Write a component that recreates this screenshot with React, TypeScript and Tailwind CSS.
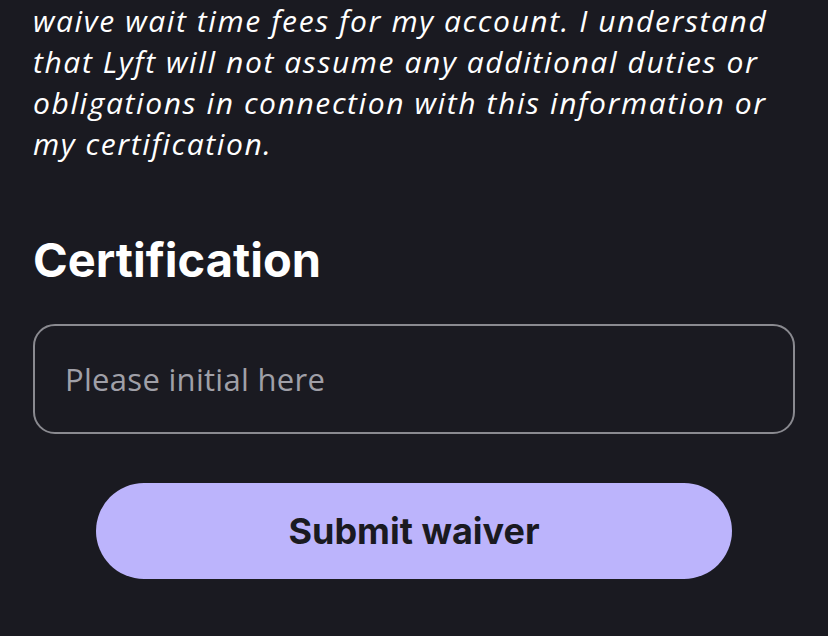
const lines = [
  "waive wait time fees for my account. I understand",
  "that Lyft will not assume any additional duties or",
  "obligations in connection with this information or",
  "my certification.",
];

export default function App() {
  return (
    <div className="min-h-[636px] w-full bg-[#1a1a21] px-[33px] pb-[57px] font-['Open_Sans',sans-serif]">
      <p className="text-[30px] leading-[41px] italic tracking-[1.6px] text-white whitespace-nowrap">
        {lines.map((l) => (
          <span key={l} className="block">
            {l}
          </span>
        ))}
      </p>

      <h2 className="mt-[68px] font-['Inter',sans-serif] text-[47px] leading-[56px] font-bold text-white">
        Certification
      </h2>

      <div className="mt-[36px] flex h-[110px] items-center rounded-[22px] border-2 border-[#8a8a90] px-[30px]">
        <input
          className="w-full bg-transparent text-[31px] tracking-[0.3px] text-white outline-none placeholder:text-[#a0a0a8]"
          placeholder="Please initial here"
        />
      </div>

      <div className="mt-[49px] flex justify-center">
        <button className="h-[96px] w-[636px] rounded-full bg-[#bcb4fc] font-['Inter',sans-serif] text-[36px] font-bold text-[#1a1a21]">
          Submit waiver
        </button>
      </div>
    </div>
  );
}
